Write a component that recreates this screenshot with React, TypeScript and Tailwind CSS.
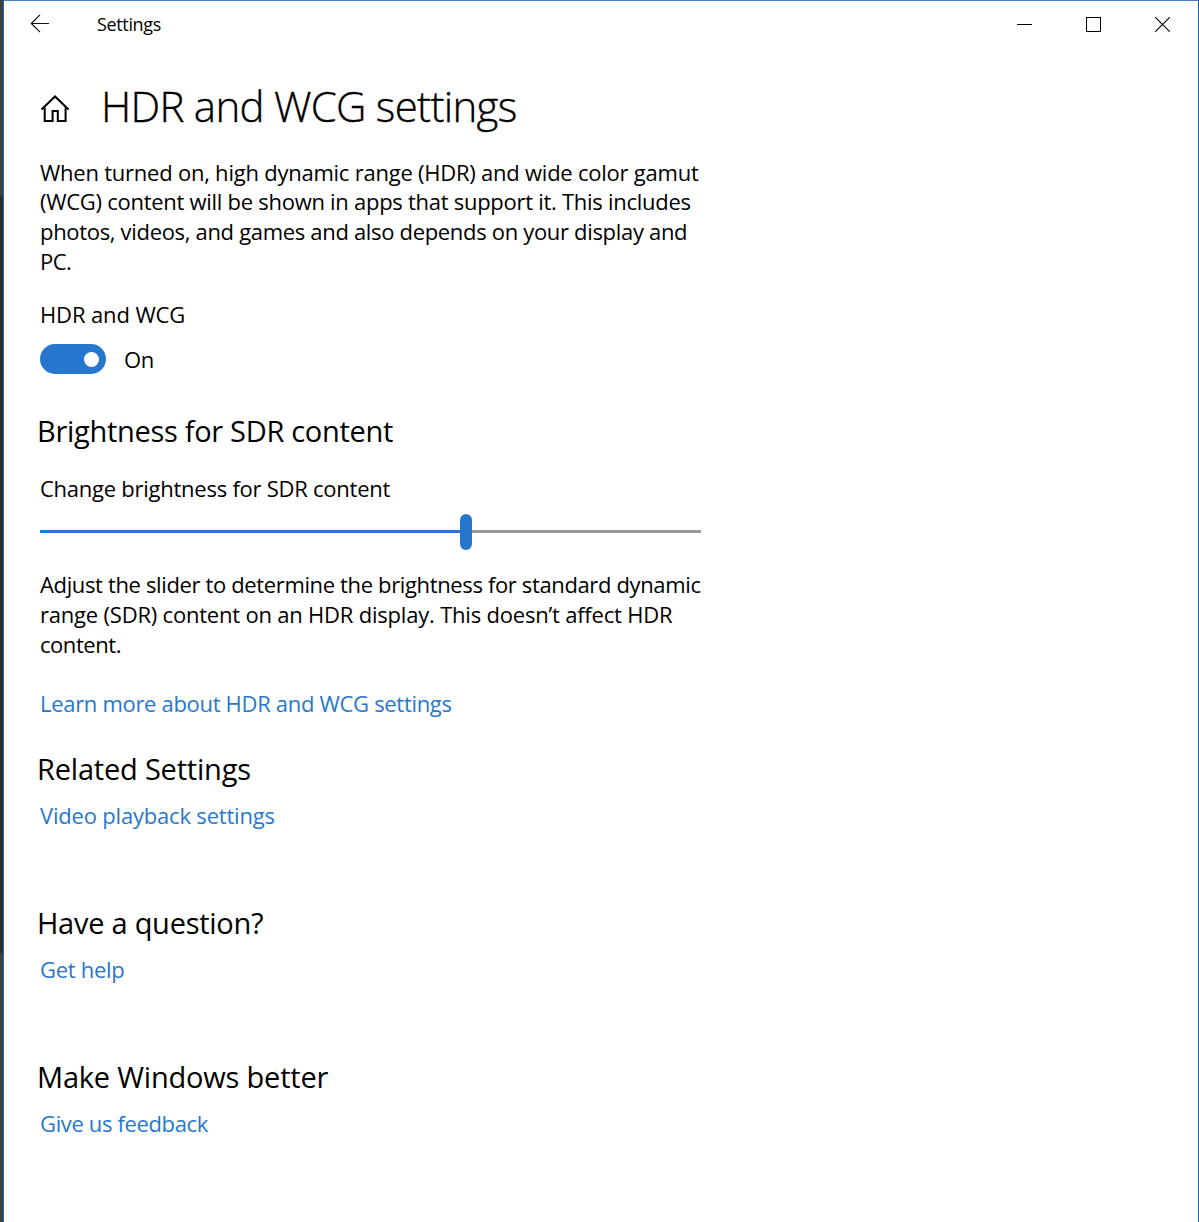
import type { ReactNode } from "react";

function Line({ className, children }: { className: string; children: ReactNode }) {
  return <span className={`block whitespace-nowrap ${className}`}>{children}</span>;
}

function Heading({ className, children }: { className: string; children: ReactNode }) {
  return (
    <h2 className={`-ml-[3px] h-10 whitespace-nowrap text-[29px] leading-10 font-normal ${className}`}>{children}</h2>
  );
}

function TextLink({ className, children }: { className: string; children: ReactNode }) {
  return (
    <a href="#" className={`block h-[30px] w-fit whitespace-nowrap text-[#2877cf] ${className}`}>
      {children}
    </a>
  );
}

function TitleBar() {
  return (
    <header className="flex h-[46px] items-center">
      <button aria-label="Back" className="ml-[26px] w-5">
        <svg className="block" width="20" height="20" viewBox="0 0 20 20" fill="none" stroke="#111" strokeWidth="1.2">
          <path d="M19 9.5H1.5M10 .8L1.3 9.5L10 18.2" />
        </svg>
      </button>
      <span className="ml-[47px] text-[18px] leading-6 tracking-[-0.35px]">Settings</span>
      <div className="mr-7 ml-auto flex items-center gap-[54px]">
        <button aria-label="Minimize">
          <svg className="block" width="15" height="15" viewBox="0 0 15 15" fill="#000" shapeRendering="crispEdges">
            <rect y="7" width="15" height="1" />
          </svg>
        </button>
        <button aria-label="Maximize">
          <svg className="block" width="15" height="15" viewBox="0 0 15 15" fill="none" stroke="#000">
            <rect x=".5" y=".5" width="14" height="14" />
          </svg>
        </button>
        <button aria-label="Close">
          <svg className="block" width="15" height="15" viewBox="0 0 15 15" fill="none" stroke="#000" strokeWidth="1.1">
            <path d="M.2 .2L14.8 14.8M14.8 .2L.2 14.8" />
          </svg>
        </button>
      </div>
    </header>
  );
}

export default function App() {
  return (
    <div className="flex h-[1222px] w-[1199px] overflow-hidden bg-white font-['Open_Sans',sans-serif] text-[22px] leading-[30px] text-black">
      <div className="flex w-[3px] shrink-0 flex-col">
        <div className="h-[196px] bg-[#404040]" />
        <div className="h-[757px] bg-[#2d2d2d]" />
        <div className="grow bg-[#404040]" />
      </div>
      <div className="grow border-t border-r border-l border-t-[#4a7ebb] border-r-[#0c60b6] border-l-[#1d68b3]">
        <TitleBar />
        <main className="ml-9 w-[661px]">
          <div className="mt-[29px] flex h-[60px] items-center">
            <svg className="mt-1.5" width="30" height="30" viewBox="0 0 30 30" fill="none" stroke="#000" strokeWidth="2">
              <path d="M1.5 15.5L15 2.5L28.5 15.5M4.7 13.5V27H12.6V17H17.8V27H25.6V13.5" />
            </svg>
            <h1 className="ml-[31px] whitespace-nowrap text-[42px] leading-[60px] font-light tracking-[-0.72px] [-webkit-text-stroke:0.35px_black]">
              HDR and WCG settings
            </h1>
          </div>

          <p className="mt-[21px]">
            <Line className="h-[29px] tracking-[-0.233px]">When turned on, high dynamic range (HDR) and wide color gamut</Line>
            <Line className="h-[30px] tracking-[-0.275px]">(WCG) content will be shown in apps that support it. This includes</Line>
            <Line className="h-[30px] tracking-[-0.32px]">photos, videos, and games and also depends on your display and</Line>
            <Line className="h-[30px] tracking-[-0.5px]">PC.</Line>
          </p>

          <div className="mt-[23px] h-[30px] tracking-[-0.12px]">HDR and WCG</div>
          <div className="mt-[15px] flex h-[30px] items-center">
            <button role="switch" aria-checked="true" aria-label="HDR and WCG" className="flex h-[30px] w-[66px] items-center justify-end rounded-full bg-[#2877cf] pr-[7px]">
              <span className="size-[15px] rounded-full bg-white" />
            </button>
            <span className="ml-[18px] tracking-[-0.4px]">On</span>
          </div>

          <Heading className="mt-[37px] tracking-[-0.3px]">Brightness for SDR content</Heading>
          <div className="mt-[22px] h-[30px] tracking-[-0.25px]">Change brightness for SDR content</div>
          <div className="mt-[11px] flex h-9 items-center">
            <div className="mb-px h-[3px] w-[420px] bg-[#2877cf]" />
            <div className="h-9 w-3 rounded-full bg-[#2877cf]" />
            <div className="mb-px h-[3px] grow bg-[#999999]" />
          </div>

          <p className="mt-[19px]">
            <Line className="h-[30px] tracking-[-0.36px]">Adjust the slider to determine the brightness for standard dynamic</Line>
            <Line className="h-[30px] tracking-[-0.205px]">range (SDR) content on an HDR display. This doesn’t affect HDR</Line>
            <Line className="h-[30px] tracking-[-0.45px]">content.</Line>
          </p>

          <TextLink className="mt-[29px] tracking-[-0.31px]">Learn more about HDR and WCG settings</TextLink>

          <Heading className="mt-[31px] tracking-[-0.2px]">Related Settings</Heading>
          <TextLink className="mt-[11px] tracking-[-0.19px]">Video playback settings</TextLink>

          <Heading className="mt-[73px] tracking-[-0.26px]">Have a question?</Heading>
          <TextLink className="mt-[11px] tracking-[-0.3px]">Get help</TextLink>

          <Heading className="mt-[73px] tracking-[-0.2px]">Make Windows better</Heading>
          <TextLink className="mt-[11px] tracking-[-0.36px]">Give us feedback</TextLink>
        </main>
      </div>
    </div>
  );
}
